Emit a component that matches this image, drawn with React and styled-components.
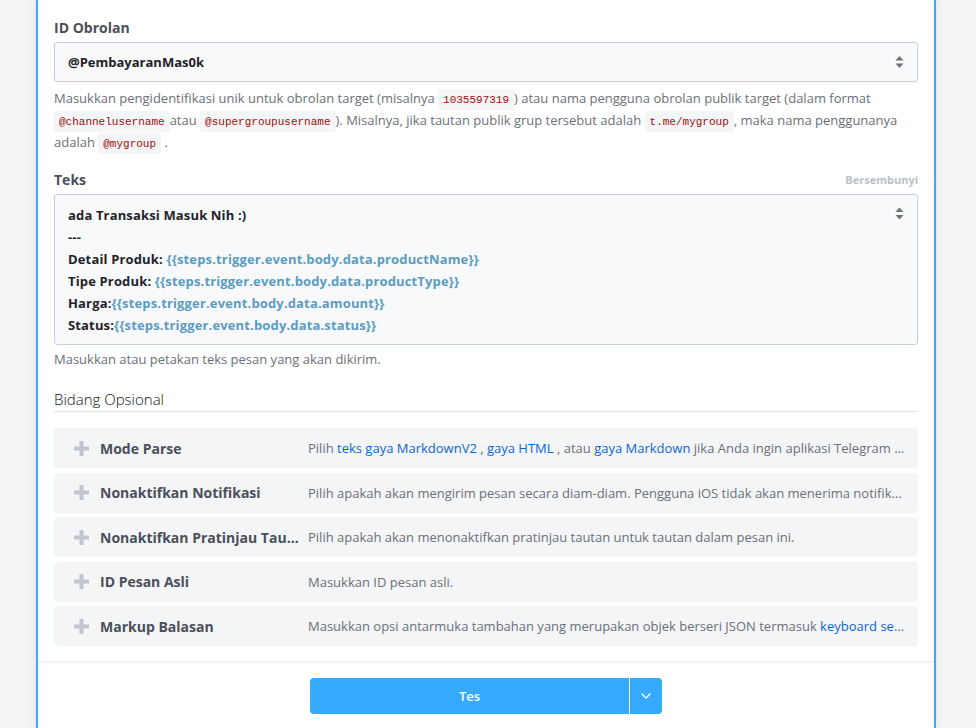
import React from 'react';
import styled, { createGlobalStyle } from 'styled-components';

const GlobalStyle = createGlobalStyle`
  html, body {
    margin: 0;
    padding: 0;
    background: #f4f5f7;
    font-family: "Open Sans", "Noto Sans", sans-serif;
    color: #1f2328;
  }
  * { box-sizing: border-box; }
`;

const Page = styled.div`
  display: flex;
  padding: 0 40px 0 36px;
  height: 728px;
  overflow: hidden;
  background: #f4f5f7;
`;

const Card = styled.div`
  width: 900px;
  min-width: 0;
  flex-shrink: 0;
  background: #fff;
  border-left: 2px solid #3fa7ff;
  border-right: 2px solid #3fa7ff;
  box-shadow: 0 0 10px rgba(30, 40, 60, 0.1);
  display: flex;
  flex-direction: column;
`;

const Body = styled.div`
  padding: 17px 16px 15px;
`;

const Field = styled.div`
  margin-top: ${(p) => p.$mt || 0}px;
`;

const LabelRow = styled.div`
  display: flex;
  justify-content: space-between;
  align-items: center;
  height: 20px;
  margin-bottom: 5px;
`;

const Label = styled.div`
  font-size: 14px;
  font-weight: 700;
  color: #4a4f5a;
`;

const Hidden = styled.span`
  font-size: 11px;
  font-weight: 700;
  color: #b9c0cb;
`;

const Input = styled.div`
  position: relative;
  background: #f8f9fb;
  border: 1px solid #c5ccd6;
  border-radius: 3px;
  height: ${(p) => p.$h || 40}px;
  padding: ${(p) => (p.$multi ? '9px 40px 8px 13px' : '0 40px 0 13px')};
  display: ${(p) => (p.$multi ? 'block' : 'flex')};
  align-items: center;
  font-size: 13px;
  font-weight: 700;
  color: #1f2328;
`;

const Caret = styled.span`
  position: absolute;
  right: 13px;
  top: ${(p) => (p.$top ? '12px' : '50%')};
  transform: ${(p) => (p.$top ? 'none' : 'translateY(-50%)')};
  display: flex;
`;

const Line = styled.div`
  line-height: 22px;
  white-space: nowrap;
  letter-spacing: 0.15px;
`;

const Var = styled.span`
  color: #5b9cc2;
`;

const Help = styled.div`
  margin-top: ${(p) => p.$mt || 5}px;
  font-size: 13px;
  line-height: ${(p) => p.$lh || 22}px;
  color: #6b7079;
`;

const Code = styled.code`
  font-family: "Liberation Mono", "DejaVu Sans Mono", monospace;
  font-size: 11px;
  line-height: 1;
  color: #a30d0d;
  background: #f4f5f7;
  padding: 5px 5px 4px;
  border-radius: 2px;
`;

const SectionTitle = styled.div`
  margin-top: 20px;
  font-size: 15px;
  font-weight: 300;
  line-height: 20px;
  color: #0f1216;
  padding-bottom: 2px;
  border-bottom: 1px solid #dcdfe3;
  margin-bottom: 16px;
`;

const OptList = styled.div`
  display: flex;
  flex-direction: column;
  gap: 4.5px;
`;

const OptRow = styled.div`
  display: flex;
  align-items: center;
  height: 40px;
  background: #f4f5f7;
  border-radius: 4px;
  padding: 0 10px 0 20px;
`;

const Plus = styled.span`
  display: flex;
  width: 26px;
`;

const OptTitle = styled.div`
  width: 208px;
  flex-shrink: 0;
  font-size: 14px;
  font-weight: 700;
  color: #4a4f5a;
  white-space: nowrap;
  overflow: hidden;
  text-overflow: ellipsis;
  padding-right: 6px;
`;

const OptDesc = styled.div`
  flex: 1;
  min-width: 0;
  font-size: 13px;
  color: #6b7079;
  white-space: nowrap;
  overflow: hidden;
  text-overflow: ellipsis;
`;

const Link = styled.span`
  color: #0b66d4;
`;

const Footer = styled.div`
  border-top: 2px solid #f2f3f5;
  padding: 15px 0 30px;
  display: flex;
  justify-content: center;
`;

const SplitButton = styled.div`
  display: flex;
  height: 36px;
  width: 352px;
  border-radius: 4px;
  overflow: hidden;
  background: #35aaff;
`;

const MainBtn = styled.div`
  flex: 1;
  display: flex;
  align-items: center;
  justify-content: center;
  color: #fff;
  font-size: 13px;
  font-weight: 600;
  border-right: 1px solid #fff;
`;

const DropBtn = styled.div`
  width: 32px;
  display: flex;
  align-items: center;
  justify-content: center;
`;

const SortIcon = () => (
  <svg width="9" height="13" viewBox="0 0 9 13">
    <path d="M4.5 0.5 L8.5 5 H0.5 Z" fill="#6d7178" />
    <path d="M4.5 12.5 L8.5 8 H0.5 Z" fill="#6d7178" />
  </svg>
);

const PlusIcon = () => (
  <svg width="15" height="15" viewBox="0 0 15 15">
    <rect x="5.5" y="0" width="4" height="15" fill="#c0c6cf" />
    <rect x="0" y="5.5" width="15" height="4" fill="#c0c6cf" />
  </svg>
);

const Chevron = () => (
  <svg width="12" height="8" viewBox="0 0 12 8">
    <path d="M1.5 1.5 L6 6 L10.5 1.5" stroke="#fff" strokeWidth="1.3" fill="none" />
  </svg>
);

const options = [
  {
    title: 'Mode Parse',
    desc: (
      <>
        Pilih <Link>teks gaya MarkdownV2</Link> , <Link>gaya HTML</Link> , atau{' '}
        <Link>gaya Markdown</Link> jika Anda ingin aplikasi Telegram menampilkan teks tebal, miring, lebar tetap, atau URL sebaris dalam pesan bot Anda.
      </>
    ),
  },
  {
    title: 'Nonaktifkan Notifikasi',
    desc: 'Pilih apakah akan mengirim pesan secara diam-diam. Pengguna iOS tidak akan menerima notifikasi, pengguna Android akan menerima notifikasi tanpa suara.',
  },
  {
    title: 'Nonaktifkan Pratinjau Tautan',
    desc: 'Pilih apakah akan menonaktifkan pratinjau tautan untuk tautan dalam pesan ini.',
  },
  { title: 'ID Pesan Asli', desc: 'Masukkan ID pesan asli.' },
  {
    title: 'Markup Balasan',
    desc: (
      <>
        Masukkan opsi antarmuka tambahan yang merupakan objek berseri JSON termasuk{' '}
        <Link>keyboard sebaris</Link>, keyboard balasan khusus, instruksi untuk menghapus keyboard balasan.
      </>
    ),
  },
];

export default function App() {
  return (
    <>
      <GlobalStyle />
      <Page>
        <Card>
          <Body>
            <Field>
              <LabelRow>
                <Label>ID Obrolan</Label>
              </LabelRow>
              <Input>
                @PembayaranMas0k
                <Caret>
                  <SortIcon />
                </Caret>
              </Input>
              <Help>
                Masukkan pengidentifikasi unik untuk obrolan target (misalnya <Code>1035597319</Code>) atau nama
                pengguna obrolan publik target (dalam format <Code>@channelusername</Code>atau{' '}
                <Code>@supergroupusername</Code>). Misalnya, jika tautan publik grup tersebut adalah{' '}
                <Code>t.me/mygroup</Code>, maka nama penggunanya adalah <Code>@mygroup</Code> .
              </Help>
            </Field>

            <Field $mt={16}>
              <LabelRow>
                <Label>Teks</Label>
                <Hidden>Bersembunyi</Hidden>
              </LabelRow>
              <Input $multi $h={151}>
                <Line>ada Transaksi Masuk Nih :)</Line>
                <Line>---</Line>
                <Line>
                  Detail Produk: <Var>{'{{steps.trigger.event.body.data.productName}}'}</Var>
                </Line>
                <Line>
                  Tipe Produk: <Var>{'{{steps.trigger.event.body.data.productType}}'}</Var>
                </Line>
                <Line>
                  Harga:<Var>{'{{steps.trigger.event.body.data.amount}}'}</Var>
                </Line>
                <Line>
                  Status:<Var>{'{{steps.trigger.event.body.data.status}}'}</Var>
                </Line>
                <Caret $top>
                  <SortIcon />
                </Caret>
              </Input>
              <Help $mt={4} $lh={20}>
                Masukkan atau petakan teks pesan yang akan dikirim.
              </Help>
            </Field>

            <SectionTitle>Bidang Opsional</SectionTitle>

            <OptList>
              {options.map((o) => (
                <OptRow key={o.title}>
                  <Plus>
                    <PlusIcon />
                  </Plus>
                  <OptTitle>{o.title}</OptTitle>
                  <OptDesc>{o.desc}</OptDesc>
                </OptRow>
              ))}
            </OptList>
          </Body>
          <Footer>
            <SplitButton>
              <MainBtn>Tes</MainBtn>
              <DropBtn>
                <Chevron />
              </DropBtn>
            </SplitButton>
          </Footer>
        </Card>
      </Page>
    </>
  );
}
